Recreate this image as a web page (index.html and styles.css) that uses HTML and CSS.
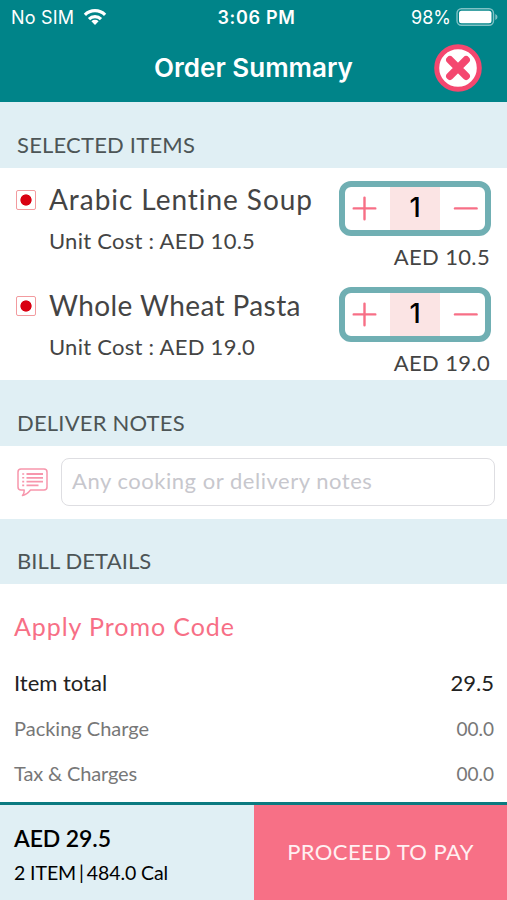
FILE: index.html
```html
<!DOCTYPE html>
<html lang="en">
<head>
<meta charset="utf-8">
<title>Order Summary</title>
<link rel="stylesheet" href="styles.css">
</head>
<body>
<div class="screen">
  <header class="top">
    <div class="status">
      <div class="status-left"><span class="carrier">No SIM</span>
        <svg class="wifi" width="24" height="18" viewBox="0 0 24 18"><g fill="none" stroke="#fff" stroke-width="3.2"><path d="M1.9 6.8a14.3 14.3 0 0 1 20.2 0"/><path d="M6 11.1a8.5 8.5 0 0 1 12 0"/></g><path d="M8.4 13.3a5.2 5.2 0 0 1 7.2 0L12 17z" fill="#fff"/></svg>
      </div>
      <span class="clock">3:06 PM</span>
      <div class="status-right"><span class="percent">98%</span>
        <svg class="battery" width="42" height="18" viewBox="0 0 42 18"><rect x="1" y=".8" width="36.5" height="16.4" rx="4.5" fill="none" stroke="#80c2c5" stroke-width="1.4"/><rect x="3" y="2.8" width="32.5" height="12.4" rx="2.5" fill="#fff"/><path d="M39.3 6q2.2 1 2.2 3t-2.2 3z" fill="#80c2c5"/></svg>
      </div>
    </div>
    <div class="titlebar">
      <h1>Order Summary</h1>
      <svg class="close" width="48" height="48" viewBox="0 0 48 48"><circle cx="24" cy="24" r="21.3" fill="#fff" stroke="#f4476f" stroke-width="5"/><path d="M15.9 15.9l16.2 16.2M32.1 15.9L15.9 32.1" stroke="#f4476f" stroke-width="7.6" stroke-linecap="round"/></svg>
    </div>
  </header>

  <h2 class="section">SELECTED ITEMS</h2>
  <div class="item">
    <span class="marker"></span>
    <div class="info"><div class="name soup">Arabic Lentine Soup</div><div class="unit">Unit Cost : AED 10.5</div></div>
    <div class="side">
      <div class="stepper">
        <svg width="45" height="43" viewBox="0 0 45 43"><path d="M8.7 21.4h21.6M19.5 10.6v21.6" stroke="#f76f86" stroke-width="2.4" stroke-linecap="round"/></svg>
        <span class="qty">1</span>
        <svg width="45" height="43" viewBox="0 0 45 43"><path d="M15 21.4h21.6" stroke="#f76f86" stroke-width="2.4" stroke-linecap="round"/></svg>
      </div>
      <div class="price">AED 10.5</div>
    </div>
  </div>
  <div class="item">
    <span class="marker"></span>
    <div class="info"><div class="name pasta">Whole Wheat Pasta</div><div class="unit">Unit Cost : AED 19.0</div></div>
    <div class="side">
      <div class="stepper">
        <svg width="45" height="43" viewBox="0 0 45 43"><path d="M8.7 21.4h21.6M19.5 10.6v21.6" stroke="#f76f86" stroke-width="2.4" stroke-linecap="round"/></svg>
        <span class="qty">1</span>
        <svg width="45" height="43" viewBox="0 0 45 43"><path d="M15 21.4h21.6" stroke="#f76f86" stroke-width="2.4" stroke-linecap="round"/></svg>
      </div>
      <div class="price">AED 19.0</div>
    </div>
  </div>

  <h2 class="section">DELIVER NOTES</h2>
  <div class="notes">
    <svg width="31" height="29" viewBox="0 0 31 29" fill="none" stroke="#f796ac"><path d="M4 1h23q3 0 3 3v15q0 3-3 3H13.5Q10 26.5 5.5 27.5q2-2.5 1.7-5.5H4q-3 0-3-3V4q0-3 3-3z" stroke-width="1.5" stroke-linejoin="round"/><path d="M9.5 6h16.5M9.5 9.8h16.5M9.5 13.6h16.5M9.5 17.4h12" stroke-width="1.8"/><path d="M5.2 6h2M5.2 9.8h2M5.2 13.6h2M5.2 17.4h2" stroke-width="1.6"/></svg>
    <div class="field">Any cooking or delivery notes</div>
  </div>

  <h2 class="section bill">BILL DETAILS</h2>
  <div class="details">
    <div class="promo">Apply Promo Code</div>
    <div class="line total"><span>Item total</span><span>29.5</span></div>
    <div class="line"><span>Packing Charge</span><span class="zero">00.0</span></div>
    <div class="line"><span class="tax">Tax &amp; Charges</span><span class="zero">00.0</span></div>
  </div>

  <footer class="bottom">
    <div class="summary"><div class="amount">AED 29.5</div><div class="count">2 ITEM<span class="bar">|</span>484.0 Cal</div></div>
    <div class="pay"><span>PROCEED TO PAY</span></div>
  </footer>
</div>
</body>
</html>
```
FILE: styles.css
```css
* { box-sizing: border-box; }
body { margin: 0; background: #fff; font-family: Lato, "Liberation Sans", sans-serif; font-variant-ligatures: none; color: #444; }
h1, h2 { margin: 0; font-weight: 400; }
svg { display: block; flex: none; }
.screen { width: 507px; height: 900px; display: flex; flex-direction: column; overflow: hidden; white-space: nowrap; }
.top { height: 102px; flex: none; background: #008489; color: #fff; font-family: Inter, sans-serif; }
.status { height: 34px; display: grid; grid-template-columns: 1fr auto 1fr; align-items: center; padding: 0 9px 0 11px; font-size: 18px; }
.status-left, .status-right { display: flex; align-items: center; gap: 9px; }
.carrier { letter-spacing: .2px; }
.status-right { justify-content: flex-end; gap: 5px; }
.clock { font-weight: 600; letter-spacing: .7px; margin-left: 4px; }
.titlebar { height: 68px; display: grid; grid-template-columns: 1fr auto 1fr; align-items: center; padding: 0 25px; }
h1 { grid-column: 2; font-size: 26px; font-weight: 600; line-height: 68px; }
.close { justify-self: end; }
.section { height: 66px; flex: none; background: #e0eff4; color: #4d5556; padding: 20px 17px 0; font-size: 22px; line-height: 46px; letter-spacing: .2px; }
.bill { height: 65px; padding-top: 19px; letter-spacing: .1px; }
.item { height: 106px; flex: none; display: flex; padding: 13px 16px 0 16px; }
.marker { width: 20px; height: 20px; flex: none; margin-top: 9px; border: 1px solid #f29b9f; border-radius: 2px; background: radial-gradient(circle, #d90012 5.2px, #fff 6px); }
.info { margin-left: 13px; flex: 1; }
.name { font-size: 28px; line-height: 36px; }
.soup { letter-spacing: .95px; }
.pasta { letter-spacing: .4px; }
.unit { font-size: 22px; line-height: 36px; margin-top: 6px; letter-spacing: .27px; }
.side { width: 152px; flex: none; }
.stepper { height: 55px; border: 6px solid #70afb3; border-radius: 12px; display: flex; justify-content: space-between; }
.qty { width: 50px; background: #fbe4e4; color: #000; text-align: center; font-family: Inter, sans-serif; font-size: 27px; line-height: 41px; font-weight: 500; }
.price { text-align: right; font-size: 22px; line-height: 30px; margin-top: 6px; padding-right: 1px; letter-spacing: .35px; }
.notes { height: 73px; flex: none; display: flex; padding: 12px 12px 0 17px; }
.notes svg { margin-top: 10px; }
.field { flex: 1; height: 48px; margin-left: 13px; border: 1.5px solid #dedee2; border-radius: 8px; padding-left: 10px; color: #c7c7cd; font-size: 22px; line-height: 43px; letter-spacing: .53px; }
.details { height: 218px; flex: none; padding: 24px 13px 0 14px; color: #777; }
.promo { color: #f76f86; font-size: 25px; line-height: 36px; margin-bottom: 16px; letter-spacing: .93px; }
.line { height: 45px; display: flex; justify-content: space-between; font-size: 20px; line-height: 47px; }
.total { color: #222; font-size: 22px; line-height: 46px; }
.zero { font-size: 19px; }
.tax { letter-spacing: -.15px; }
.bottom { flex: 1; border-top: 3px solid #0b7a80; display: flex; }
.summary { width: 254px; background: #e0eff4; color: #000; padding: 18px 14px 0; }
.amount { font-size: 23px; line-height: 30px; font-weight: 600; letter-spacing: -.1px; }
.count { font-size: 19.5px; line-height: 36px; margin-top: 2px; letter-spacing: -.1px; }
.bar { margin: 0 3px; }
.pay { flex: 1; background: #f77086; color: #fff0f2; display: flex; align-items: center; justify-content: center; font-size: 22px; letter-spacing: .4px; padding-bottom: 2px; }
```
